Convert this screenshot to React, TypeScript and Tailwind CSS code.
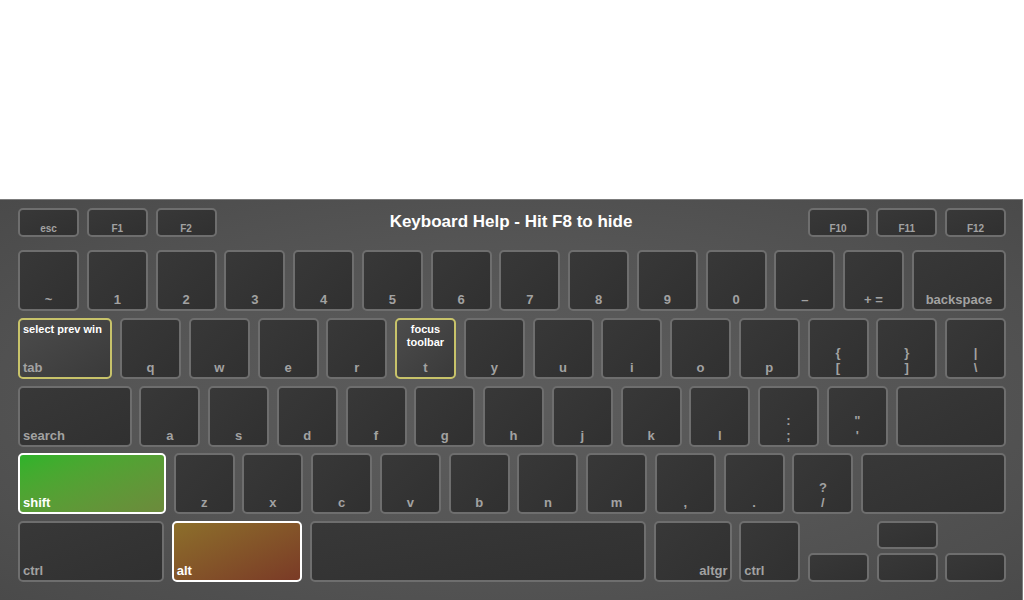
import React from "react"

type KeyProps = {
  label?: React.ReactNode
  hint?: React.ReactNode
  align?: "left" | "center" | "right"
  variant?: "plain" | "hint" | "shift" | "alt"
  className?: string
  small?: boolean
}

const variants = {
  plain: "border-[#6e6e6e] bg-gradient-to-br from-[#383838] to-[#303030] text-[#a2a2a2]",
  hint: "border-[#c8c36a] bg-gradient-to-br from-[#4c4c4c] to-[#3a3a3a] text-[#a2a2a2]",
  shift: "border-white bg-gradient-to-br from-[#2db32a] to-[#6c8a3c] text-white",
  alt: "border-white bg-gradient-to-br from-[#8c6f2b] to-[#7a3a26] text-white",
}

function Key({ label, hint, align = "center", variant = "plain", className = "w-[61px] h-[61px]", small }: KeyProps) {
  const justify = align === "left" ? "items-start pl-[3px]" : align === "right" ? "items-end pr-[2px]" : "items-center"
  return (
    <div className={`${className} shrink-0 rounded-[5px] border-2 flex flex-col justify-between ${justify} ${variants[variant]}`}>
      {hint ? (
        <div className={`text-white text-[11px] leading-[13px] pt-[3px] ${align === "left" ? "" : "text-center"}`}>{hint}</div>
      ) : (
        <div />
      )}
      <div className={`${small ? "text-[10px] leading-[12px] pb-0" : "text-[13px] leading-[15px] pb-[2px]"} text-center`}>
        {label}
      </div>
    </div>
  )
}

function Stack({ top, bottom }: { top: string; bottom: string }) {
  return (
    <span className="flex flex-col items-center leading-[15px]">
      <span>{top}</span>
      <span>{bottom}</span>
    </span>
  )
}

export default function App() {
  const fn = "w-[61px] h-[29px]"
  const row = "flex gap-[7.75px] h-[61px]"

  return (
    <div className="w-[1024px] h-[600px] bg-white flex flex-col font-['Liberation_Sans',Arial,sans-serif] font-bold overflow-hidden">
      <div className="h-[199px] shrink-0" />

      {/* keyboard panel */}
      <div className="w-[1023px] flex-1 border-t border-r border-[#7c7c7c] bg-[radial-gradient(ellipse_at_center,#5d5d5d_0%,#555555_55%,#4a4a4a_100%)] pt-[8px] pl-[18px] pr-[16px]">
        <div className="flex gap-[7.75px] items-center">
          <Key label="esc" className={fn} small />
          <Key label="F1" className={fn} small />
          <Key label="F2" className={fn} small />
          <div className="flex-1 text-center text-white text-[17px] leading-[20px] -mt-[1px] pr-[2px]">
            Keyboard Help - Hit F8 to hide
          </div>
          <Key label="F10" className={fn} small />
          <Key label="F11" className={fn} small />
          <Key label="F12" className={fn} small />
        </div>

        <div className="flex flex-col gap-[6.8px] mt-[13px]">
          <div className={row}>
            {["~", "1", "2", "3", "4", "5", "6", "7", "8", "9", "0", "–", "+ ="].map((k) => (
              <Key key={k} label={k} />
            ))}
            <Key label="backspace" className="flex-1 h-[61px]" />
          </div>

          <div className={row}>
            <Key label="tab" hint="select prev win" align="left" variant="hint" className="flex-1 h-[61px]" />
            {["q", "w", "e", "r"].map((k) => (
              <Key key={k} label={k} />
            ))}
            <Key label="t" hint={<>focus<br />toolbar</>} variant="hint" />
            {["y", "u", "i", "o", "p"].map((k) => (
              <Key key={k} label={k} />
            ))}
            <Key label={<Stack top="{" bottom="[" />} />
            <Key label={<Stack top="}" bottom="]" />} />
            <Key label={<Stack top="|" bottom="\" />} />
          </div>

          <div className={row}>
            <Key label="search" align="left" className="flex-1 h-[61px]" />
            {["a", "s", "d", "f", "g", "h", "j", "k", "l"].map((k) => (
              <Key key={k} label={k} />
            ))}
            <Key label={<Stack top=":" bottom=";" />} />
            <Key label={<Stack top={'"'} bottom="'" />} />
            <Key className="flex-1 h-[61px]" />
          </div>

          <div className={row}>
            <Key label="shift" align="left" variant="shift" className="flex-1 h-[61px]" />
            {["z", "x", "c", "v", "b", "n", "m", ",", "."].map((k) => (
              <Key key={k} label={k} />
            ))}
            <Key label={<Stack top="?" bottom="/" />} />
            <Key className="flex-1 h-[61px]" />
          </div>

          <div className={row}>
            <Key label="ctrl" align="left" className="w-[146px] h-[61px]" />
            <Key label="alt" align="left" variant="alt" className="w-[130px] h-[61px]" />
            <Key className="flex-1 h-[61px]" />
            <Key label="altgr" align="right" className="w-[78px] h-[61px]" />
            <Key label="ctrl" align="left" />
            <div className="w-[198px] shrink-0 grid grid-cols-3 grid-rows-[28px_29px] gap-x-[7.5px] gap-y-[4px]">
              <div />
              <Key className="h-[28px]" />
              <div />
              <Key className="h-[29px]" />
              <Key className="h-[29px]" />
              <Key className="h-[29px]" />
            </div>
          </div>
        </div>
      </div>
    </div>
  )
}
